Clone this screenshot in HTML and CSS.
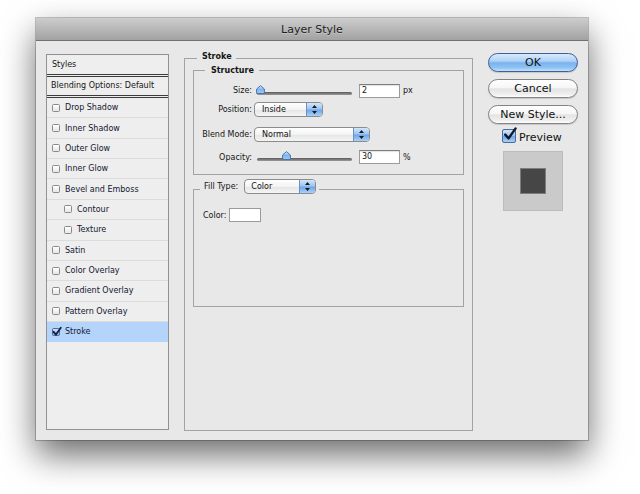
FILE: index.html
```html
<!DOCTYPE html>
<html>
<head>
<meta charset="utf-8">
<title>Layer Style</title>
<link rel="stylesheet" href="styles.css">
</head>
<body>
<div class="window">
  <div class="titlebar">Layer Style</div>
  <div class="content">
    <div class="styles-panel">
      <div class="sp-head">Styles</div>
      <div class="sp-blend">Blending Options: Default</div>
      <ul class="sp-list">
        <li class="sp-row"><span class="cb"></span>Drop Shadow</li>
        <li class="sp-row"><span class="cb"></span>Inner Shadow</li>
        <li class="sp-row"><span class="cb"></span>Outer Glow</li>
        <li class="sp-row"><span class="cb"></span>Inner Glow</li>
        <li class="sp-row"><span class="cb"></span>Bevel and Emboss</li>
        <li class="sp-row sub"><span class="cb"></span>Contour</li>
        <li class="sp-row sub"><span class="cb"></span>Texture</li>
        <li class="sp-row"><span class="cb"></span>Satin</li>
        <li class="sp-row"><span class="cb"></span>Color Overlay</li>
        <li class="sp-row"><span class="cb"></span>Gradient Overlay</li>
        <li class="sp-row"><span class="cb"></span>Pattern Overlay</li>
        <li class="sp-row selected"><span class="cb cb-on"><svg width="10" height="10" viewBox="0 0 10 10"><path d="M1.6 4.8 L4 7.6 L8.8 0.8" fill="none" stroke="#14213d" stroke-width="1.8" stroke-linecap="round" stroke-linejoin="round"/></svg></span>Stroke</li>
      </ul>
    </div>

    <fieldset class="group outer">
      <legend class="lg-outer">Stroke</legend>
      <fieldset class="group structure">
        <legend class="lg-inner">Structure</legend>
        <div class="frow r1">
          <span class="flabel">Size:</span>
          <div class="slider"><span class="track"></span><svg class="thumb" style="left:2px" width="9" height="9" viewBox="0 0 9 9"><path d="M4.5 0.6 L8.4 4 L8.4 8.4 L0.6 8.4 L0.6 4 Z" fill="url(#tg)" stroke="#3e6aa8" stroke-width="0.9"/><defs><linearGradient id="tg" x1="0" y1="0" x2="0" y2="1"><stop offset="0" stop-color="#d6e9fd"/><stop offset="0.5" stop-color="#7fb3ee"/><stop offset="1" stop-color="#a9d0f8"/></linearGradient></defs></svg></div>
          <span class="num">2</span><span class="unit">px</span>
        </div>
        <div class="frow r2">
          <span class="flabel">Position:</span>
          <span class="popup w-pos">Inside<span class="arrows"><svg width="15" height="13" viewBox="0 0 15 13"><path d="M5 5 L10 5 L7.5 2 Z M5 8 L10 8 L7.5 11 Z" fill="#1a1a1a"/></svg></span></span>
        </div>
        <div class="frow r3">
          <span class="flabel">Blend Mode:</span>
          <span class="popup w-blend">Normal<span class="arrows"><svg width="15" height="13" viewBox="0 0 15 13"><path d="M5 5 L10 5 L7.5 2 Z M5 8 L10 8 L7.5 11 Z" fill="#1a1a1a"/></svg></span></span>
        </div>
        <div class="frow r4">
          <span class="flabel">Opacity:</span>
          <div class="slider"><span class="track"></span><svg class="thumb" style="left:28px" width="9" height="9" viewBox="0 0 9 9"><path d="M4.5 0.6 L8.4 4 L8.4 8.4 L0.6 8.4 L0.6 4 Z" fill="url(#tg2)" stroke="#3e6aa8" stroke-width="0.9"/><defs><linearGradient id="tg2" x1="0" y1="0" x2="0" y2="1"><stop offset="0" stop-color="#d6e9fd"/><stop offset="0.5" stop-color="#7fb3ee"/><stop offset="1" stop-color="#a9d0f8"/></linearGradient></defs></svg></div>
          <span class="num">30</span><span class="unit">%</span>
        </div>
      </fieldset>
      <fieldset class="group fill">
        <legend class="lg-fill"><span>Fill Type:</span><span class="popup w-fill">Color<span class="arrows"><svg width="15" height="13" viewBox="0 0 15 13"><path d="M5 5 L10 5 L7.5 2 Z M5 8 L10 8 L7.5 11 Z" fill="#1a1a1a"/></svg></span></span></legend>
        <div class="color-row"><span>Color:</span><span class="swatch"></span></div>
      </fieldset>
    </fieldset>

    <div class="side">
      <button class="btn btn-default">OK</button>
      <button class="btn">Cancel</button>
      <button class="btn btn-last">New Style...</button>
      <div class="preview-cb"><span class="pcb"><svg width="16" height="16" viewBox="0 0 16 16"><path d="M3.2 7.6 L6.6 11.4 L13.6 1.4" fill="none" stroke="#10182b" stroke-width="2.4" stroke-linecap="round" stroke-linejoin="round"/></svg></span><span class="pv-text">Preview</span></div>
      <div class="preview-box"><div class="preview-swatch"></div></div>
    </div>
  </div>
</div>
</body>
</html>
```
FILE: styles.css
```css
* { box-sizing: border-box; margin: 0; padding: 0; }
html, body { width: 640px; height: 494px; background: #ffffff; overflow: hidden; }
body { padding: 18px 0 0 36px; font-family: "DejaVu Sans", "Lucida Grande", sans-serif; color: #151515; }

.window {
  width: 552px; height: 422px; background: #e8e8e8;
  display: flex; flex-direction: column;
  box-shadow: 0 15px 32px rgba(0,0,0,0.58), 0 0 0 1px rgba(0,0,0,0.22);
}
.titlebar {
  height: 23px; border-bottom: 1px solid #707070;
  background: linear-gradient(#cdcdcd, #a2a2a2);
  font-size: 11px; line-height: 24px; text-align: center; color: #1c1c1c;
  text-shadow: 0 1px 0 rgba(255,255,255,0.3);
}
.content { flex: 1; display: flex; align-items: flex-start; padding: 10px 10px 0; }

/* Styles list */
.styles-panel {
  width: 123px; height: 376px; margin-top: 3px;
  background: #eeeeee; border: 1px solid #929292;
  font-size: 8px;
}
.sp-head { height: 22px; line-height: 19px; padding-left: 5px; border-bottom: 3px double #3c3c3c; }
.sp-blend { height: 21px; line-height: 18px; padding-left: 4px; border-bottom: 3px double #3c3c3c; }
.sp-list { list-style: none; }
.sp-row {
  height: 20.36px; border-bottom: 1px solid #dcdcdc;
  display: flex; align-items: center; padding-left: 5px; color: #121830;
}
.sp-row.sub { padding-left: 17px; }
.sp-row.selected { background: #b5d4fc; border-bottom-color: #b5d4fc; }
.cb {
  width: 8px; height: 8px; margin-right: 5px; flex: none;
  border: 1px solid #8a8a8a; border-radius: 1.5px;
  background: linear-gradient(#ffffff, #e6e6e6);
  position: relative;
}
.cb-on { background: linear-gradient(#cfe3fa, #7fb0ea); border-color: #4a6a9a; }
.cb-on svg { position: absolute; left: -1px; top: -2px; overflow: visible; }

/* group boxes */
fieldset.group { border: 1px solid #a3a3a3; min-inline-size: 0; }
.outer { width: 289px; height: 380px; margin-left: 15px; padding: 0 8px; }
.lg-outer { font-size: 8px; font-weight: bold; line-height: 11px; padding: 0 4px 3px 5px; margin-left: 4px; }
.structure { width: 271px; height: 110px; padding: 7px 8px 0; }
.lg-inner { font-size: 8px; font-weight: bold; line-height: 11px; padding: 0 5px 0 6px; margin-left: 3px; }

.frow { display: flex; align-items: center; font-size: 8px; }
.r1 { height: 15px; }
.r2 { height: 15px; margin-top: 4px; }
.r3 { height: 15px; margin-top: 10px; }
.r4 { height: 14px; margin-top: 8px; }
.flabel { width: 50px; text-align: right; flex: none; }

.slider { position: relative; width: 99px; height: 12px; margin-left: 2px; padding: 7px 0 0 3px; flex: none; }
.track {
  display: block; width: 95px; height: 3px; border-radius: 2px;
  background: linear-gradient(#5a5a5a, #9a9a9a);
}
.thumb { position: absolute; top: 0; }

.num {
  width: 41px; height: 14px; margin-left: 6px; padding-left: 2px;
  background: #fff; border: 1px solid #9b9b9b; border-top-color: #7d7d7d;
  box-shadow: inset 0 1px 1px rgba(0,0,0,0.12);
  line-height: 12px; font-size: 8px;
}
.unit { margin-left: 3px; }

.popup {
  display: flex; align-items: center; justify-content: space-between;
  height: 15px; margin-left: 2px; padding-left: 7px;
  border: 1px solid #8c8c8c; border-radius: 4px; overflow: hidden;
  background: linear-gradient(#ffffff 0%, #f3f3f3 50%, #e6e6e6 55%, #f5f5f5 100%);
  font-size: 8px; color: #111;
}
.w-pos { width: 69px; }
.w-blend { width: 116px; }
.w-fill { width: 72px; margin-left: 6px; padding-left: 6px; }
.arrows {
  width: 16px; height: 100%; display: flex; align-items: center; justify-content: center;
  border-left: 1px solid #6e8fc2;
  background: linear-gradient(#d2e6fb 0%, #9cc6f3 45%, #6ea7ea 55%, #a9d1f8 100%);
}

.fill { width: 271px; height: 128px; margin-top: 4px; padding: 9px 9px 0; }
.lg-fill { display: flex; align-items: center; font-size: 8px; padding: 0 3px 5px 4px; margin-left: -3px; }
.color-row { display: flex; align-items: center; font-size: 8px; height: 14px; }
.swatch { width: 32px; height: 14px; margin-left: 3px; background: #fff; border: 1px solid #9b9b9b; }

/* right column */
.side { width: 90px; margin-left: 15px; margin-top: 2px; display: flex; flex-direction: column; }
.btn {
  height: 19px; width: 90px; margin-bottom: 7px;
  border: 1px solid #838383; border-radius: 10px;
  background: linear-gradient(#ffffff 0%, #f6f6f6 45%, #e4e4e4 52%, #efefef 85%, #ffffff 100%);
  font-family: "DejaVu Sans", sans-serif; font-size: 11px; color: #111; line-height: 16px;
  box-shadow: 0 1px 1px rgba(0,0,0,0.15);
}
.btn-default {
  border-color: #3f5f99;
  background: linear-gradient(#d8eafc 0%, #aed1f6 42%, #7bb2ee 52%, #8dc2f3 80%, #c3e2fc 100%);
}
.btn-last { margin-bottom: 5px; }
.preview-cb { display: flex; align-items: center; height: 14px; font-size: 11px; color: #111; }
.pv-text { padding-top: 3px; }
.pcb {
  width: 14px; height: 14px; margin-left: 14px; margin-right: 3px; position: relative;
  border: 1px solid #4a6a9a; border-radius: 2px;
  background: linear-gradient(#d4e7fb 0%, #9cc6f3 45%, #6ea7ea 55%, #a9d1f8 100%);
}
.pcb svg { position: absolute; left: -1px; top: -3px; overflow: visible; }
.preview-box {
  width: 60px; height: 60px; margin: 8px 0 0 15px;
  background: #cacaca; border: 1px solid #bcbcbc;
  display: flex; align-items: center; justify-content: center;
}
.preview-swatch { width: 26px; height: 26px; background: #464646; border: 1px solid #7c7c7c; }
```
